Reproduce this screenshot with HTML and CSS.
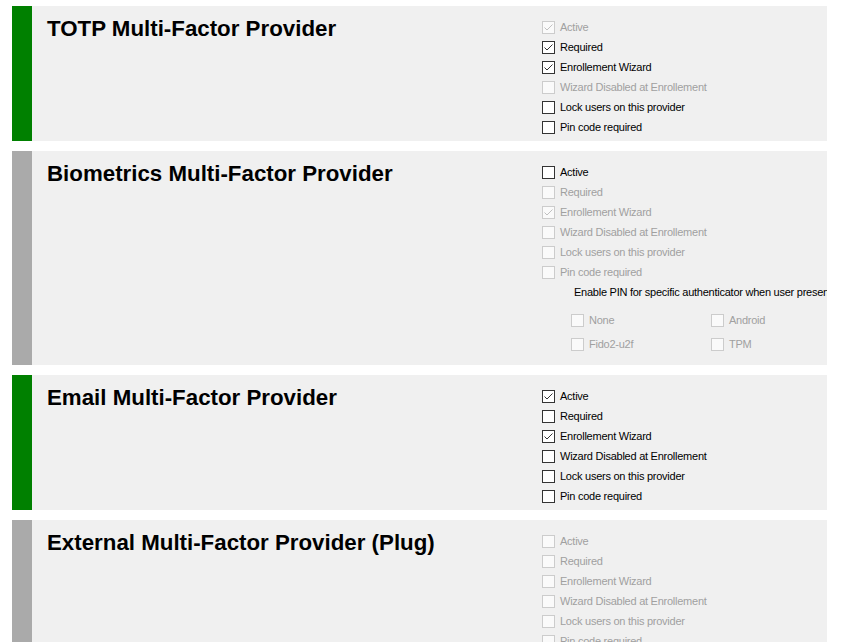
FILE: index.html
```html
<!DOCTYPE html>
<html lang="en">

<head>
  <meta charset="UTF-8">
  <meta name="viewport" content="width=device-width, initial-scale=1.0">
  <title>Multi-Factor Providers</title>
  <link rel="stylesheet" href="styles.css">
</head>

<body>
  <div class="providers">

    <!-- TOTP -->
    <section class="provider">
      <div class="bar bar-on"></div>
      <h2 class="title">TOTP Multi-Factor Provider</h2>
      <div class="options">
        <label class="opt disabled"><span class="box checked"></span>Active</label>
        <label class="opt"><span class="box checked"></span>Required</label>
        <label class="opt"><span class="box checked"></span>Enrollement Wizard</label>
        <label class="opt disabled"><span class="box"></span>Wizard Disabled at Enrollement</label>
        <label class="opt"><span class="box"></span>Lock users on this provider</label>
        <label class="opt"><span class="box"></span>Pin code required</label>
      </div>
    </section>

    <!-- Biometrics -->
    <section class="provider">
      <div class="bar bar-off"></div>
      <h2 class="title">Biometrics Multi-Factor Provider</h2>
      <div class="options">
        <label class="opt"><span class="box"></span>Active</label>
        <label class="opt disabled"><span class="box"></span>Required</label>
        <label class="opt disabled"><span class="box checked"></span>Enrollement Wizard</label>
        <label class="opt disabled"><span class="box"></span>Wizard Disabled at Enrollement</label>
        <label class="opt disabled"><span class="box"></span>Lock users on this provider</label>
        <label class="opt disabled"><span class="box"></span>Pin code required</label>
        <p class="pin-note">Enable PIN for specific authenticator when user presents the security key</p>
        <div class="pin-grid">
          <label class="opt disabled"><span class="box"></span>None</label>
          <label class="opt disabled"><span class="box"></span>Android</label>
          <label class="opt disabled"><span class="box"></span>Fido2-u2f</label>
          <label class="opt disabled"><span class="box"></span>TPM</label>
        </div>
      </div>
    </section>

    <!-- Email -->
    <section class="provider">
      <div class="bar bar-on"></div>
      <h2 class="title">Email Multi-Factor Provider</h2>
      <div class="options">
        <label class="opt"><span class="box checked"></span>Active</label>
        <label class="opt"><span class="box"></span>Required</label>
        <label class="opt"><span class="box checked"></span>Enrollement Wizard</label>
        <label class="opt"><span class="box"></span>Wizard Disabled at Enrollement</label>
        <label class="opt"><span class="box"></span>Lock users on this provider</label>
        <label class="opt"><span class="box"></span>Pin code required</label>
      </div>
    </section>

    <!-- External -->
    <section class="provider">
      <div class="bar bar-off"></div>
      <h2 class="title">External Multi-Factor Provider (Plug)</h2>
      <div class="options">
        <label class="opt disabled"><span class="box"></span>Active</label>
        <label class="opt disabled"><span class="box"></span>Required</label>
        <label class="opt disabled"><span class="box"></span>Enrollement Wizard</label>
        <label class="opt disabled"><span class="box"></span>Wizard Disabled at Enrollement</label>
        <label class="opt disabled"><span class="box"></span>Lock users on this provider</label>
        <label class="opt disabled"><span class="box"></span>Pin code required</label>
      </div>
    </section>

  </div>

  <script>
    // draw the check mark inside every checked box
    const tick = '<svg width="11" height="11" viewBox="0 0 11 11"><path d="M1.5 5.5 L4 8 L9.5 2.5" fill="none" stroke="currentColor" stroke-width="1"/></svg>';
    document.querySelectorAll('.box.checked').forEach((box) => {
      box.innerHTML = tick;
    });
  </script>
</body>

</html>
```

FILE: styles.css
```css
* {
  margin: 0;
  padding: 0;
  box-sizing: border-box;
}

html,
body {
  height: 100%;
  overflow: hidden;
}

body {
  font-family: 'Liberation Sans', Arial, sans-serif;
  background-color: #fff;
  color: #000;
}

.providers {
  display: flex;
  flex-direction: column;
  gap: 10px;
  width: 815px;
  margin: 6px 0 0 12px;
}

.provider {
  display: flex;
  background-color: #f0f0f0;
  overflow: hidden;
}

.bar {
  flex: 0 0 20px;
}

.bar-on {
  background-color: #008000;
}

.bar-off {
  background-color: #aaaaaa;
}

.title {
  flex: 0 0 510px;
  padding: 10px 0 0 15px;
  font-size: 22.3px;
  line-height: 26px;
  font-weight: 700;
  white-space: nowrap;
}

.options {
  flex: 1;
  min-width: 0;
  padding: 11px 0 4px;
  font-size: 11px;
  letter-spacing: -0.25px;
  white-space: nowrap;
}

.opt {
  display: flex;
  align-items: center;
  gap: 5px;
  height: 20px;
}

.opt.disabled {
  color: #a0a0a0;
}

.box {
  flex: 0 0 13px;
  width: 13px;
  height: 13px;
  border: 1px solid #333;
  background-color: #fff;
  color: #333;
  display: flex;
}

.opt.disabled .box {
  border-color: #cccccc;
  background-color: #fafafa;
  color: #c0c0c0;
}

.pin-note {
  height: 20px;
  line-height: 20px;
  padding-left: 32px;
}

.pin-grid {
  display: grid;
  grid-template-columns: 140px 140px;
  row-gap: 4px;
  margin: 8px 0 7px 29px;
}
```
